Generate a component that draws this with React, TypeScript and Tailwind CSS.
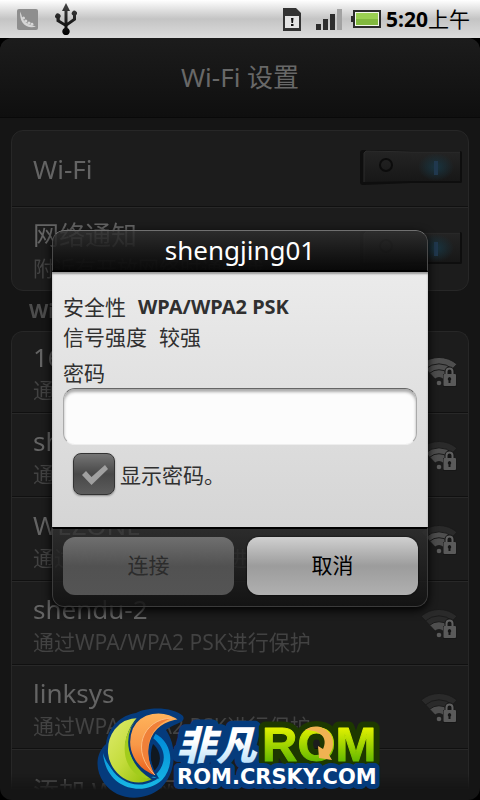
import React, { useId, useState } from "react";

const FONT = "font-['Noto_Sans','Noto_Sans_CJK_SC',sans-serif]";

function StatusBar() {
  return (
    <header className="flex h-[38px] shrink-0 items-center justify-between bg-linear-to-b from-white via-[#c4c4c4] via-50% to-[#dcdcdc] pr-[10px] pl-[17px]">
      <div className="flex items-center gap-[17px]">
        <svg width="21" height="21" viewBox="0 0 21 21" aria-hidden="true">
          <rect width="21" height="21" rx="2" fill="#8e8e8e" />
          <path d="M3 2.500 L4.500 6 C5 10 9 15 14 16 L19 17.500 C14 19.500 8 17.500 5.500 13.500 C3.500 10.500 3 7 3 2.500Z" fill="#d6d6d6" />
          <circle cx="6.500" cy="9" r="1.500" fill="#d6d6d6" />
          <circle cx="8.800" cy="12" r="1.600" fill="#d6d6d6" />
          <circle cx="12" cy="14" r="1.600" fill="#d6d6d6" />
          <circle cx="15" cy="15.200" r="1.400" fill="#d6d6d6" />
        </svg>
        <svg width="22" height="32" viewBox="0 0 22 32" aria-hidden="true">
          <defs>
            <linearGradient id="usb" x1="0" y1="0" x2="0" y2="1">
              <stop offset="0" stopColor="#444" />
              <stop offset="1" stopColor="#000" />
            </linearGradient>
          </defs>
          <path d="M11 0 L15 8 H12.500 V19.500 L18 15.500 V12.500 A2.600 2.600 0 1 1 21 12.300 V17 L12.500 23 V25 A3.700 3.700 0 1 1 9.500 25 V23.300 L1.500 18.500 V15.500 A2.700 2.700 0 1 1 4.800 15 V17 L9.500 20 V8 H7Z" fill="url(#usb)" />
        </svg>
      </div>
      <div className="flex items-center">
        <svg width="18" height="23" viewBox="0 0 18 23" aria-hidden="true">
          <path d="M0 0 H13 L18 5 V23 H0Z" fill="#333" />
          <rect x="2" y="8" width="14" height="12" fill="#e4e4e4" />
          <path d="M8 10 H10.500 L10 15 H8.500Z M8 16 H10.500 V18 H8Z" fill="#111" />
        </svg>
        <svg className="ml-[15px]" width="26" height="21" viewBox="0 0 26 21" aria-hidden="true">
          <path d="M0 15 H5 V21 H0Z M7 10 H12 V21 H7Z M14 5 H19 V21 H14Z" fill="#2c2c2c" />
          <path d="M21 0 H26 V21 H21Z" fill="#a2a2a2" />
        </svg>
        <svg className="ml-[9px]" width="30" height="18" viewBox="0 0 30 18" aria-hidden="true">
          <path d="M2 0 H30 V18 H2 V12 H0 V6 H2Z" fill="#2c2c2c" />
          <rect x="4" y="2" width="24" height="14" fill="#f2f8ea" />
          <rect x="5" y="3" width="22" height="12" fill="#82b93f" />
          <rect x="5" y="3" width="22" height="6" fill="#9ad052" />
        </svg>
        <time className="ml-[5px] text-[21px] leading-[28px] whitespace-nowrap text-black">
          <b>5:20</b>上午
        </time>
      </div>
    </header>
  );
}

function Toggle({ id }: { id: string }) {
  const [on, setOn] = useState(true);
  const g = useId();
  return (
    <span className="grid h-[38px] w-[104px] shrink-0">
      <svg className="pointer-events-none col-start-1 row-start-1" width="104" height="38" viewBox="0 0 104 38" aria-hidden="true">
        <defs>
          <linearGradient id={g + "f"} x1="0" y1="0" x2="0" y2="1">
            <stop offset="0" stopColor="#242424" />
            <stop offset="1" stopColor="#171717" />
          </linearGradient>
          <radialGradient id={g + "b"}>
            <stop offset="0" stopColor="#183440" />
            <stop offset="1" stopColor="#183440" stopOpacity="0" />
          </radialGradient>
        </defs>
        <path d="M4 0 L52 1 H101 Q103 1 103 3 V32 Q103 33 101 33 H52 L4 35 Q1 35 1 32 V3 Q1 0 4 0Z" fill="#0e0e0e" />
        <path d="M7 1 L52 2 V31 L5 32 V3Z" fill={"url(#" + g + "f)"} />
        <path d="M52 2 H101 V31 H52Z" fill={"url(#" + g + "f)"} />
        <path d="M5 32 V3 L7 1 L52 2 H101" fill="none" stroke="#2c2c2c" />
        <circle cx="27" cy="15" r="6" fill="none" stroke="#0c0c0c" strokeWidth="2" />
        {on && <ellipse cx="77" cy="17" rx="18" ry="14" fill={"url(#" + g + "b)"} />}
        <rect x="75" y="11" width="4" height="14" fill={on ? "#20384e" : "#101010"} />
      </svg>
      <input
        id={id}
        type="checkbox"
        role="switch"
        checked={on}
        onChange={() => setOn(!on)}
        className="col-start-1 row-start-1 h-full w-full cursor-pointer appearance-none"
      />
    </span>
  );
}

function arc(r: number) {
  const d = r * 0.69;
  const h = r * 0.724;
  const k = r * 1.05;
  return `M18 26 L${18 - d} ${26 - h} A${k} ${k} 0 0 1 ${18 + d} ${26 - h}Z`;
}

function WifiLock({ level }: { level: number }) {
  const rings = [26, 19.5, 13.5];
  return (
    <svg className="shrink-0" width="36" height="30" viewBox="0 0 36 30" aria-hidden="true">
      {rings.map((r, i) => (
        <path key={r} d={arc(r)} fill={level >= 3 - i ? "#4e4e4e" : "#2a2a2a"} stroke="#1b1b1b" strokeWidth="1" />
      ))}
      <path d={arc(6)} fill="#1c1c1c" />
      <circle cx="18" cy="26" r="2.300" fill="#5a5a5a" />
      <path d="M23.500 17 V14.500 A5 5 0 0 1 33.500 14.500 V17 H35.500 V30 H22 V17Z" fill="#161616" />
      <path d="M25.500 18 V14.500 A3 3 0 0 1 31.500 14.500 V18" fill="none" stroke="#606060" strokeWidth="2" />
      <rect x="22.500" y="17" width="12.500" height="12" rx="1" fill="#5a5a5a" />
      <path d="M28.500 20 A2 2 0 0 1 29.500 23.500 V26 H27.500 V23.500 A2 2 0 0 1 28.500 20Z" fill="#161616" />
    </svg>
  );
}

const networks = [
  { name: "16", level: 3 },
  { name: "shengjing01", level: 2 },
  { name: "WEZONE", level: 2 },
  { name: "shendu-2", level: 1 },
  { name: "linksys", level: 1 },
];

const ROW =
  "flex h-[84px] items-center justify-between border-b border-[#101010] pt-[3px] pr-[11px] pl-[21px] shadow-[0_1px_0_#282828] first:h-[81px] first:pt-0";
const TITLE = "block text-[26px] leading-[36px] text-[#646464]";
const SUB = "block text-[21px] leading-[30px] whitespace-nowrap text-[#424242]";

function Settings() {
  return (
    <div className="flex min-h-0 flex-1 flex-col overflow-hidden rounded-xl bg-[#151515]">
      <h1 className="flex h-[80px] shrink-0 items-center justify-center rounded-t-xl border-b border-[#090909] bg-linear-to-b from-[#1c1c1c] to-[#0f0f0f] text-[26px] text-[#686868]">
        Wi-Fi 设置
      </h1>
      <main className="min-h-0 flex-1 overflow-hidden mask-[linear-gradient(to_top,transparent_10px,black_26px)] px-[11px] pt-[12px]">
        <section className="rounded-xl border border-[#272727] bg-[#1c1c1c]">
          <div className="flex h-[76px] items-center justify-between border-b border-[#101010] pr-[5px] pl-[21px] shadow-[0_1px_0_#282828]">
            <label htmlFor="wifi" className={TITLE}>Wi-Fi</label>
            <Toggle id="wifi" />
          </div>
          <div className="flex h-[83px] items-center justify-between pt-[2px] pr-[5px] pl-[21px]">
            <label htmlFor="notify">
              <span className={TITLE}>网络通知</span>
              <span className={SUB}>附近有开放网络时通知我</span>
            </label>
            <Toggle id="notify" />
          </div>
        </section>
        <h2 className="pl-[18px] text-[20px] leading-[40px] font-bold text-[#4c4c4c]">Wi-Fi 网络</h2>
        <ul className="rounded-t-xl border border-b-0 border-[#272727] bg-[#1c1c1c]">
          {networks.map((n) => (
            <li key={n.name} className={ROW}>
              <div>
                <span className={TITLE}>{n.name}</span>
                <span className={SUB}>通过WPA/WPA2 PSK进行保护</span>
              </div>
              <WifiLock level={n.level} />
            </li>
          ))}
          <li className="flex h-[84px] items-center pl-[21px]">
            <span className={TITLE}>添加 Wi-Fi 网络</span>
          </li>
        </ul>
      </main>
    </div>
  );
}

function Dialog() {
  const [show, setShow] = useState(true);
  return (
    <div className="absolute inset-x-0 top-[37px] bottom-0 flex items-center justify-center px-[52px]">
      <div
        role="dialog"
        aria-labelledby="dialog-title"
        className="w-full max-w-[376px] overflow-hidden rounded-xl shadow-[0_3px_10px_#000]"
      >
        <h2
          id="dialog-title"
          className="h-[42px] rounded-t-xl border border-b-2 border-[#4a4a4a] border-t-[#707070] border-b-black bg-linear-to-b from-[#303030]/80 to-[#080808]/95 text-center text-[26px] leading-[39px] text-white"
        >
          shengjing01
        </h2>
        <form className="h-[255px] bg-linear-to-b from-[#ebebeb] to-[#d5d5d5] px-[11px] pt-[20px] text-[21px] leading-[30px] text-[#303030] shadow-[inset_0_2px_2px_#999]">
          <dl className="grid grid-cols-[auto_1fr] gap-x-3">
            <dt>安全性</dt>
            <dd className="text-[20px] font-bold">WPA/WPA2 PSK</dd>
          </dl>
          <dl className="grid grid-cols-[auto_1fr] gap-x-3">
            <dt>信号强度</dt>
            <dd>较强</dd>
          </dl>
          <label htmlFor="password" className="mt-[6px] block">密码</label>
          <input
            id="password"
            type={show ? "text" : "password"}
            className="block h-[57px] w-full rounded-xl border border-x-[#aaaaaa] border-t-[#666666] border-b-[#eeeeee] bg-[#fcfcfc] px-3 shadow-[inset_0_3px_3px_#aaa] outline-none"
          />
          <div className="mt-[8px] flex items-center gap-[5px] pl-[10px]">
            <span className="grid h-[42px] w-[42px]">
              <input
                id="show"
                type="checkbox"
                checked={show}
                onChange={() => setShow(!show)}
                className="col-start-1 row-start-1 appearance-none rounded-lg border border-[#333333] bg-linear-to-b from-[#757575] via-[#484848] to-[#5c5c5c] shadow-[0_1px_2px_#888]"
              />
              {show && (
                <svg className="pointer-events-none col-start-1 row-start-1" viewBox="0 0 42 42" aria-hidden="true">
                  <path d="M9 22 L13 18 L18.500 24 L32 12 L35 16 L18.500 32Z" fill="#a0a0a0" />
                </svg>
              )}
            </span>
            <label htmlFor="show" className="pt-[2px]">显示密码。</label>
          </div>
        </form>
        <div className="grid h-[80px] grid-cols-2 gap-[13px] rounded-b-xl border border-t-2 border-[#3b3b3b] border-t-black bg-linear-to-b from-[#303030]/80 to-[#121212]/85 pt-[8px] pr-[9px] pb-[11px] pl-[10px] text-[21px]">
          <button disabled className="rounded-xl bg-linear-to-b from-[#777777]/90 via-[#575757]/90 to-[#5b5b5b]/90 text-[#2c2c2c]">
            连接
          </button>
          <button className="rounded-xl bg-linear-to-b from-[#d0d0d0] via-[#9c9c9c] to-[#b0b0b0] text-black shadow-[0_0_2px_#000]">
            取消
          </button>
        </div>
      </div>
    </div>
  );
}

function Watermark() {
  return (
    <svg className="pointer-events-none absolute bottom-0 left-1/2 ml-[-148px]" width="296" height="100" viewBox="92 700 296 100" role="img" aria-label="非凡ROM ROM.CRSKY.COM">
      <defs>
        <linearGradient id="lime" x1="0" y1="0" x2="1" y2="1">
          <stop offset="0" stopColor="#e0ec70" />
          <stop offset="0.500" stopColor="#c4dc3c" />
          <stop offset="1" stopColor="#8abc00" />
        </linearGradient>
        <linearGradient id="orange" x1="0" y1="0" x2="0" y2="1">
          <stop offset="0" stopColor="#ffb45c" />
          <stop offset="0.500" stopColor="#f89848" />
          <stop offset="1" stopColor="#e85a18" />
        </linearGradient>
        <linearGradient id="blue" x1="0" y1="0" x2="0" y2="1">
          <stop offset="0" stopColor="#0088d8" />
          <stop offset="1" stopColor="#18b8e4" />
        </linearGradient>
        <linearGradient id="rom" gradientUnits="userSpaceOnUse" x1="0" y1="726" x2="0" y2="762">
          <stop offset="0" stopColor="#e8f400" />
          <stop offset="1" stopColor="#62b800" />
        </linearGradient>
        <linearGradient id="ice" gradientUnits="userSpaceOnUse" x1="0" y1="726" x2="0" y2="764">
          <stop offset="0.400" stopColor="#ffffff" />
          <stop offset="1" stopColor="#b8e0fa" />
        </linearGradient>
      </defs>
      <path d="M136 713 C148 706 174 707 183 716 C187 723 172 724 166 730 C178 748 176 773 161 788 C143 803 116 800 104 783 C95 770 95 754 106 744 C108 727 121 715 136 713Z" fill="#053b7c" />
      <path d="M153 744 C162 752 162 764 154 771 C150 762 150 752 153 744Z" fill="#101820" />
      <path d="M154 733 C173 742 175 766 162 780 C144 797 106 790 103 753 C108 770 122 780 138 781 C158 782 176 756 153 738Z" fill="url(#blue)" />
      <path d="M139 717 C116 717 106 736 107 753 C109 774 131 792 155 779 C126 776 116 742 139 717Z" fill="url(#lime)" stroke="#053b7c" strokeWidth="2" />
      <path d="M137 720 C117 738 121 777 151 779 C130 766 122 744 137 720Z" fill="#a2cc1c" />
      <path d="M180 720 C162 707 140 712 132 728 C124 748 134 770 157 777 C142 754 148 724 180 720Z" fill="url(#orange)" stroke="#053b7c" strokeWidth="2" />
      <path d="M172 718 C142 719 130 752 155 775 C142 752 147 727 172 718Z" fill="#f08038" />
      <path d="M172 718 C142 719 130 752 155 775" fill="none" stroke="#ffc890" strokeWidth="0.800" />
      <g strokeLinejoin="round" paintOrder="stroke">
        <text x="176" y="760" fontFamily="'Noto Sans CJK SC', sans-serif" fontSize="40" fontWeight="900" fontStyle="italic" fill="url(#ice)" stroke="#053b7c" strokeWidth="13">非凡</text>
        <text x="262" y="761" fontFamily="'Liberation Sans', sans-serif" fontSize="49" fontWeight="700" fill="#1d3800" stroke="#1d3800" strokeWidth="13">ROM</text>
        <text x="177" y="784" fontFamily="'DejaVu Sans', sans-serif" fontSize="21" fontWeight="700" fill="#ffffff" stroke="#053b7c" strokeWidth="10">ROM.CRSKY.COM</text>
      </g>
      <text x="262" y="761" fontFamily="'Liberation Sans', sans-serif" fontSize="49" fontWeight="700" fill="url(#rom)" stroke="url(#rom)" strokeWidth="1" strokeLinejoin="round">ROM</text>
      <path d="M305 730 C318 721 334 731 333 744 C333 749 331 752 329 755 L332 760 L319 758 L318 746 L323 749 C328 739 322 730 305 730Z" fill="#f0b252" />
    </svg>
  );
}

export default function App() {
  return (
    <div className={"relative flex h-screen flex-col overflow-hidden bg-black " + FONT}>
      <StatusBar />
      <Settings />
      <Dialog />
      <Watermark />
    </div>
  );
}
